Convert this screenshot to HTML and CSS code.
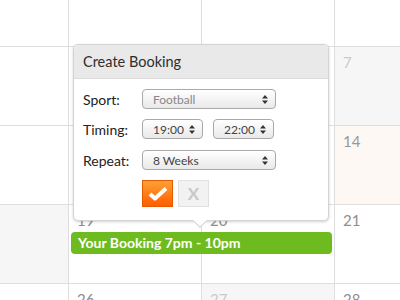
FILE: index.html
```html
<!DOCTYPE html>
<html lang="en">
<head>
    <meta charset="UTF-8">
    <title>Create Booking</title>
    <link rel="stylesheet" href="styles.css">
</head>
<body>
    <div class="page">
        <div class="calendar">
            <div class="day"></div><div class="day"></div><div class="day"></div><div class="day"></div>
            <div class="day"></div>
            <div class="day"></div>
            <div class="day"></div>
            <div class="day past"><span>7</span></div>
            <div class="day"></div>
            <div class="day"></div>
            <div class="day"></div>
            <div class="day today"><span>14</span></div>
            <div class="day past"></div>
            <div class="day"><span>19</span></div>
            <div class="day"><span>20</span></div>
            <div class="day"><span>21</span></div>
            <div class="day"></div>
            <div class="day"><span>26</span></div>
            <div class="day past"><span>27</span></div>
            <div class="day"><span>28</span></div>
        </div>

        <div class="event">Your Booking 7pm - 10pm</div>

        <div class="popup">
            <div class="popup-header">Create Booking</div>
            <div class="popup-body">
                <div class="row">
                    <label>Sport:</label>
                    <div class="select wide muted"><span>Football</span><svg width="6" height="9" viewBox="0 0 6 9"><path d="M3 0L6 3.5H0z M3 9L6 5.5H0z" fill="#333"/></svg></div>
                </div>
                <div class="row">
                    <label>Timing:</label>
                    <div class="select small"><span>19:00</span><svg width="6" height="9" viewBox="0 0 6 9"><path d="M3 0L6 3.5H0z M3 9L6 5.5H0z" fill="#333"/></svg></div>
                    <div class="select small"><span>22:00</span><svg width="6" height="9" viewBox="0 0 6 9"><path d="M3 0L6 3.5H0z M3 9L6 5.5H0z" fill="#333"/></svg></div>
                </div>
                <div class="row repeat">
                    <label>Repeat:</label>
                    <div class="select wide"><span>8 Weeks</span><svg width="6" height="9" viewBox="0 0 6 9"><path d="M3 0L6 3.5H0z M3 9L6 5.5H0z" fill="#333"/></svg></div>
                </div>
                <div class="actions">
                    <button class="btn-ok"><svg width="20" height="15" viewBox="0 0 20 15"><path d="M2 8L7 12.5L18 2.5" fill="none" stroke="#fff" stroke-width="4" stroke-linejoin="round"/></svg></button>
                    <button class="btn-cancel">X</button>
                </div>
            </div>
        </div>
    </div>
</body>
</html>
```

FILE: styles.css
```css
body { margin: 0; font-family: Lato, "Liberation Sans", sans-serif; background: #fff; }
.page { position: relative; width: 400px; height: 300px; overflow: hidden; }

.calendar { display: grid; grid-template-columns: repeat(4, 132px); grid-auto-rows: 78px; gap: 1px; background: #dedede; width: 531px; margin: -32px 0 0 -64px; }
.day { background: #fff; padding: 6px 8px; font-size: 15px; color: #8e8e8e; }
.day.past { background: #f6f6f7; color: #c9c9c9; }
.day.today { background: #fdf8f4; color: #999; }

.event { position: absolute; left: 71px; top: 232px; width: 254px; height: 22px; line-height: 22px; padding-left: 7px; border-radius: 4px; background: #6ebb1f; color: #fff; font-weight: bold; font-size: 14px; }

.popup { position: absolute; left: 73px; top: 44px; width: 254px; height: 175px; background: #fff; border: 1px solid #d4d4d4; border-radius: 5px; box-shadow: 0 1px 3px rgba(0, 0, 0, 0.18); }
.popup::after { content: ""; position: absolute; left: 121px; bottom: -6px; width: 9px; height: 9px; background: #fff; border-right: 1px solid #d4d4d4; border-bottom: 1px solid #d4d4d4; transform: rotate(45deg); }
.popup-header { height: 33px; line-height: 34px; padding-left: 9px; background: #e9e9e9; border-bottom: 1px solid #dcdcdc; border-radius: 5px 5px 0 0; font-size: 14.5px; color: #2e2e2e; }
.popup-body { padding: 10px 9px 0 9px; }

.row { display: flex; align-items: center; gap: 10px; margin-bottom: 10px; }
.row.repeat { margin-top: 11px; }
.row label { width: 59px; margin-right: -10px; font-size: 14px; color: #222; }
.select { display: flex; align-items: center; justify-content: space-between; box-sizing: border-box; height: 20px; padding: 0 7px 0 10px; border: 1px solid #a9a9a9; border-radius: 4px; background: linear-gradient(#ffffff, #e9e9e9); font-size: 12px; color: #444; }
.select.wide { width: 134px; }
.select.small { width: 61px; }
.select.muted { color: #888; }

.actions { display: flex; gap: 5px; margin-left: 59px; }
.actions button { display: flex; align-items: center; justify-content: center; width: 31px; height: 27px; padding: 0; box-sizing: border-box; }
.btn-ok { border: 1px solid #e35a00; background: linear-gradient(#ffa035, #ff5d00); }
.btn-cancel { border: 1px solid #e0e0e0; background: #f2f2f2; color: #c8c8c8; font-family: Lato, "Liberation Sans", sans-serif; font-weight: bold; font-size: 17px; }
```
